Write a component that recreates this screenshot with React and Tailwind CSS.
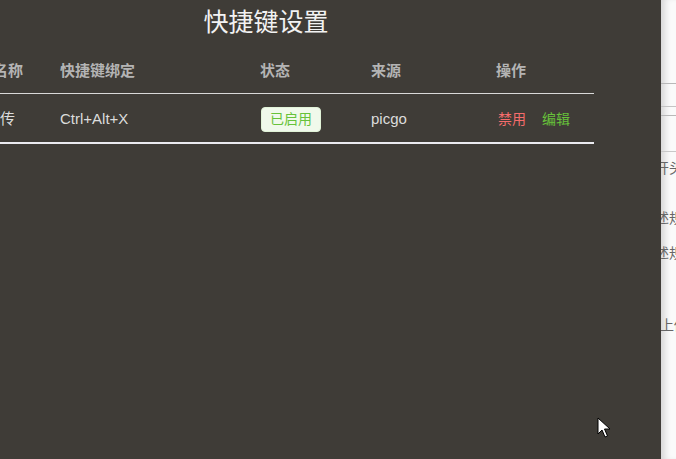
import React from "react";

const font = { fontFamily: '"Liberation Sans", "Noto Sans CJK SC", sans-serif' };

function Cursor() {
  return (
    <svg className="absolute left-[597px] top-[417px]" width="14" height="22" viewBox="0 0 14 22">
      <path d="M1 1 L1 17 L5 13 L8 20 L10.5 19 L7.5 12 L13 12 Z" fill="#fff" stroke="#000" strokeWidth="1" strokeLinejoin="round" />
    </svg>
  );
}

export default function App() {
  return (
    <div className="relative w-[676px] h-[459px] flex overflow-hidden" style={font}>
      {/* Shortcut settings panel */}
      <div className="w-[661px] h-full bg-[#3f3c37] overflow-hidden">
        <div className="w-[532px] pt-[6px] text-center text-[25px] leading-[32px] text-[#f2f2f2]">快捷键设置</div>

        <div className="ml-[-17px] w-[611px] mt-[12px]">
          <div className="flex h-[44px] items-center border-b border-[#d9d9d9] text-[15px] font-bold text-[#b4b4b4]">
            <div className="w-[67px] pl-[10px]">名称</div>
            <div className="w-[200px] pl-[10px]">快捷键绑定</div>
            <div className="w-[111px] pl-[10px]">状态</div>
            <div className="w-[125px] pl-[10px]">来源</div>
            <div className="w-[108px] pl-[10px]">操作</div>
          </div>
          <div className="flex h-[50px] items-center pt-[2px] border-b-2 border-[#ebebf0] text-[15px] text-[#dcdcdc]">
            <div className="w-[67px] pl-[2px]">上传</div>
            <div className="w-[200px] pl-[10px]">Ctrl+Alt+X</div>
            <div className="w-[111px] pl-[11px]">
              <span className="inline-flex h-[25px] w-[60px] items-center justify-center rounded-[4px] border border-[#e1f3d8] bg-[#f0f9eb] text-[14px] text-[#67c23a]">已启用</span>
            </div>
            <div className="w-[125px] pl-[10px]">picgo</div>
            <div className="w-[108px] pl-[12px] flex gap-[16px] text-[14px]">
              <span className="text-[#f56c6c]">禁用</span>
              <span className="text-[#67c23a]">编辑</span>
            </div>
          </div>
        </div>
      </div>

      {/* Page behind, mostly hidden */}
      <div className="flex-1 h-full bg-[#fafafa] shadow-[inset_7px_0_6px_-3px_rgba(0,0,0,0.14)] overflow-hidden text-[14px] text-[#666]">
        <div className="h-[84px] border-b border-[#b8b8b8]"></div>
        <div className="h-[23px] border-b border-[#c4c4c4]"></div>
        <div className="h-[9px] border-b border-[#b8b8b8]"></div>
        <div className="h-[36px] border-b border-[#c8c8c8]"></div>
        <div className="whitespace-nowrap leading-[18px]">
          <div className="mt-[7px] ml-[-6px]">开头</div>
          <div className="mt-[32px] ml-[-6px]">述规</div>
          <div className="mt-[17px] ml-[-6px]">述规</div>
          <div className="mt-[54px] ml-[-1px]">上传</div>
        </div>
      </div>

      <Cursor />
    </div>
  );
}
